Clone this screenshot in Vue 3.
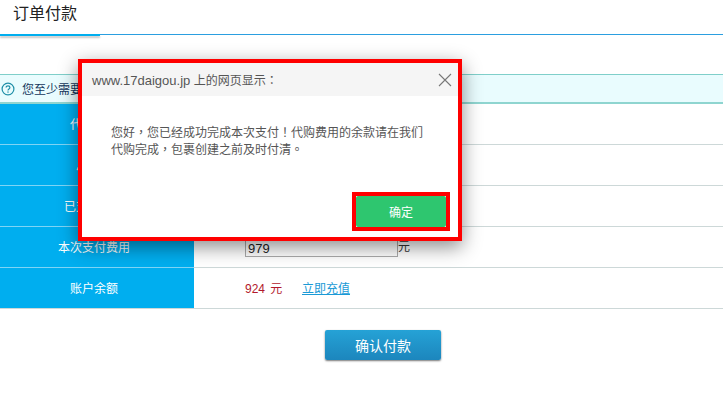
<template>
  <div class="page">
    <!-- Title -->
    <div class="title-bar">
      <h2 class="title">订单付款</h2>
    </div>

    <!-- Notice -->
    <div class="notice">
      <svg class="help" width="14" height="14" viewBox="0 0 14 14">
        <circle cx="7" cy="7" r="5.9" fill="none" stroke="#1f8fa8" stroke-width="1.2" />
        <path d="M5.1 5.6c0-1.1.9-1.8 1.9-1.8s1.9.7 1.9 1.7c0 1.4-1.9 1.5-1.9 2.9" fill="none" stroke="#1f8fa8" stroke-width="1.2" />
        <rect x="6.4" y="9.4" width="1.2" height="1.3" fill="#1f8fa8" />
      </svg>
      <span>您至少需要</span>
    </div>

    <!-- Rows -->
    <div class="table">
      <div class="row" v-for="row in rows" :key="row.label">
        <div class="label">{{ row.label }}</div>
        <div class="value">
          <template v-if="row.type === 'input'">
            <input class="pay-input" value="979" />
            <span class="unit">元</span>
          </template>
          <template v-else-if="row.type === 'balance'">
            <span class="balance">924 元</span>
            <a class="recharge">立即充值</a>
          </template>
        </div>
      </div>
    </div>

    <div class="actions">
      <button class="pay-btn">确认付款</button>
    </div>

    <!-- Alert dialog -->
    <div class="dialog">
      <div class="dialog-head">
        <span><span class="host">www.17daigou.jp</span> 上的网页显示：</span>
        <svg class="close" width="14" height="14" viewBox="0 0 14 14">
          <path d="M1 1l12 12M13 1L1 13" stroke="#777" stroke-width="1.1" fill="none" />
        </svg>
      </div>
      <p class="dialog-msg">您好，您已经成功完成本次支付！代购费用的余款请在我们代购完成，包裹创建之前及时付清。</p>
      <div class="dialog-foot">
        <div class="ok-frame">
          <button class="ok-btn">确定</button>
        </div>
      </div>
    </div>
  </div>
</template>

<script setup>
const rows = [
  { label: '代购费用' },
  { label: '总费用' },
  { label: '已支付费用' },
  { label: '本次支付费用', type: 'input' },
  { label: '账户余额', type: 'balance' }
]
</script>

<style>
html,
body {
  margin: 0;
  background: #fff;
}
</style>

<style scoped>
.page {
  position: relative;
  width: 723px;
  height: 402px;
  overflow: hidden;
  background: #fff;
  font-family: "Liberation Sans", "Noto Sans CJK SC", sans-serif;
  font-size: 12px;
  color: #333;
}

.title-bar {
  position: relative;
  height: 34px;
  border-bottom: 1px solid #2b9fe0;
  margin-bottom: 39px;
}
.title-bar::after {
  content: "";
  position: absolute;
  left: 0;
  bottom: -2px;
  width: 100px;
  height: 2px;
  background: #00aeef;
  box-shadow: 0 2px 2px #c4c4c4;
}
.title {
  margin: 0;
  padding: 3px 0 0 13px;
  font-size: 16px;
  line-height: 21px;
  font-weight: 400;
  color: #222;
}

.notice {
  box-sizing: border-box;
  height: 30px;
  display: flex;
  align-items: center;
  gap: 7px;
  padding-left: 1px;
  background: #e9fcfe;
  border-top: 1px solid #7fcfca;
  border-bottom: 2px solid #8fd5d0;
  color: #14365c;
}

.row {
  box-sizing: border-box;
  height: 41px;
  display: flex;
  border-bottom: 1px solid #cdd8d8;
}
.label {
  width: 194px;
  height: 41px;
  box-sizing: border-box;
  padding: 0 6px 2px 0;
  border-bottom: 1px solid #7fd4f5;
  background: #00aeef;
  color: #fff;
  display: flex;
  align-items: center;
  justify-content: center;
}
.row:last-child .label {
  border-bottom: none;
  height: 40px;
}
.value {
  flex: 1;
  display: flex;
  align-items: center;
  padding: 0 0 2px 51px;
}

.pay-input {
  box-sizing: border-box;
  width: 153px;
  height: 20px;
  margin: 1px 0 0;
  padding: 3px 2px 0;
  border: 1px solid #aaa;
  background: #fff;
  font-family: inherit;
  font-size: 13px;
  color: #222;
}
.unit {
  margin-top: -1px;
  color: #333;
}
.balance {
  color: #b2182b;
  width: 57px;
  word-spacing: 2px;
}
.recharge {
  color: #1a9ad6;
  text-decoration: underline;
}

.actions {
  display: flex;
  padding: 21px 0 0 325px;
}
.pay-btn {
  width: 116px;
  height: 30px;
  border: none;
  border-radius: 2px;
  background: linear-gradient(#25a2d6, #1c86bd);
  box-shadow: 0 1px 2px #777;
  color: #fff;
  font-family: inherit;
  font-size: 14px;
}

.dialog {
  position: absolute;
  left: 78px;
  top: 59px;
  box-sizing: border-box;
  width: 384px;
  height: 182px;
  border: 4px solid #f00;
  background: #fff;
  box-shadow: 0 6px 18px rgba(0, 0, 0, 0.45);
}
.dialog-head {
  height: 33px;
  padding: 0 6px 0 10px;
  display: flex;
  align-items: center;
  justify-content: space-between;
  background: #f5f5f5;
  color: #555;
  font-family: "Liberation Sans", "Noto Sans CJK TC", sans-serif;
}
.host {
  font-size: 13px;
}
.close {
  display: block;
}
.dialog-msg {
  margin: 29px 0 0 29px;
  width: 318px;
  line-height: 17px;
  color: #555;
  font-family: "Liberation Sans", "Noto Sans CJK TC", sans-serif;
}
.dialog-foot {
  position: absolute;
  right: 8px;
  bottom: 6px;
}
.ok-frame {
  border: 4px solid #f00;
  display: flex;
}
.ok-btn {
  width: 90px;
  height: 31px;
  border: none;
  border-radius: 2px;
  background: #2ec66f;
  color: #fff;
  font-family: inherit;
  font-size: 12px;
}
</style>
